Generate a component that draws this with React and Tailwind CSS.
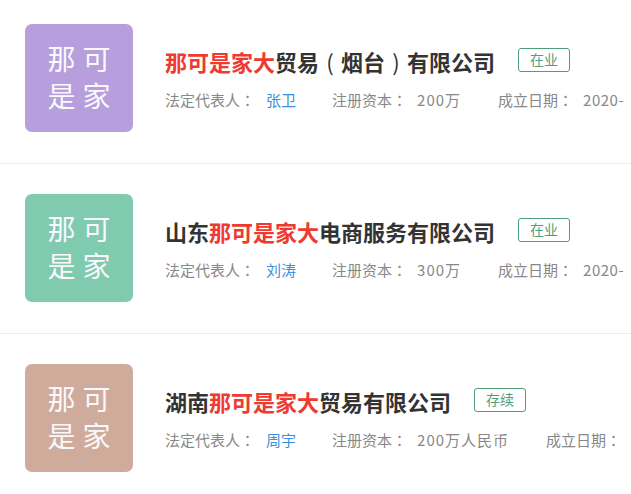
import React from "react";

const P = ({ children }) => (
  <span style={{ fontFamily: '"Noto Sans CJK TC", "Noto Sans CJK SC", sans-serif' }}>{children}</span>
);

const Paren = ({ children }) => (
  <span className="inline-block w-[22px] text-center font-normal">{children}</span>
);

const rows = [
  {
    bg: "bg-[#b69fdc]",
    title: (
      <>
        <span className="text-[#ee3a31]">那可是家大</span>贸易<Paren>(</Paren>烟台<Paren>)</Paren>有限公司
      </>
    ),
    tag: "在业",
    rep: "张卫",
    cap: "200万",
    date: "2020-",
  },
  {
    bg: "bg-[#80cab0]",
    title: (
      <>
        山东<span className="text-[#ee3a31]">那可是家大</span>电商服务有限公司
      </>
    ),
    tag: "在业",
    rep: "刘涛",
    cap: "300万",
    date: "2020-",
  },
  {
    bg: "bg-[#cfab9c]",
    title: (
      <>
        湖南<span className="text-[#ee3a31]">那可是家大</span>贸易有限公司
      </>
    ),
    tag: "存续",
    rep: "周宇",
    cap: "200万人民币",
    date: "",
  },
];

function Row({ r, first, last }) {
  return (
    <div
      className={`flex items-center pl-[25px] ${first ? "pt-[24px]" : "pt-[30px]"} pb-[31px] ${
        last ? "" : "border-b border-[#ececec]"
      }`}
    >
      <div
        className={`w-[108px] h-[108px] shrink-0 rounded-[7px] ${r.bg} flex flex-col items-center justify-center text-[28px] leading-[37px] text-[#fbf8fc] tracking-[7px] pl-[7px] pb-[3px]`}
      >
        <div>那可</div>
        <div>是家</div>
      </div>
      <div className="ml-[32px] flex flex-col whitespace-nowrap">
        <div className="flex items-center h-[30px]">
          <span className="text-[22px] leading-[30px] font-bold text-[#333333]">{r.title}</span>
          <span className="ml-[23px] mt-[-3px] w-[52px] h-[24px] border border-[#4f9f7c] rounded-[3px] text-[14px] text-[#4f9f7c] flex items-center justify-center">
            {r.tag}
          </span>
        </div>
        <div className="mt-[14px] flex items-center h-[20px] text-[15px] leading-[20px] text-[#888888]">
          <span>
            法定代表人<P>：</P>
            <span className="ml-[11px] text-[#3c8fdc]">{r.rep}</span>
          </span>
          <span className="ml-[36px]">
            注册资本<P>：</P>
            <span className="ml-[10px] tracking-[1px]">{r.cap}</span>
          </span>
          <span className="ml-[37px]">
            成立日期<P>：</P>
            <span className="ml-[10px] tracking-[0.5px]">{r.date}</span>
          </span>
        </div>
      </div>
    </div>
  );
}

export default function App() {
  return (
    <div
      className="w-[631px] h-[494px] overflow-hidden bg-white"
      style={{ fontFamily: '"Noto Sans CJK SC", "Noto Sans", sans-serif' }}
    >
      {rows.map((r, i) => (
        <Row key={i} r={r} first={i === 0} last={i === rows.length - 1} />
      ))}
    </div>
  );
}
